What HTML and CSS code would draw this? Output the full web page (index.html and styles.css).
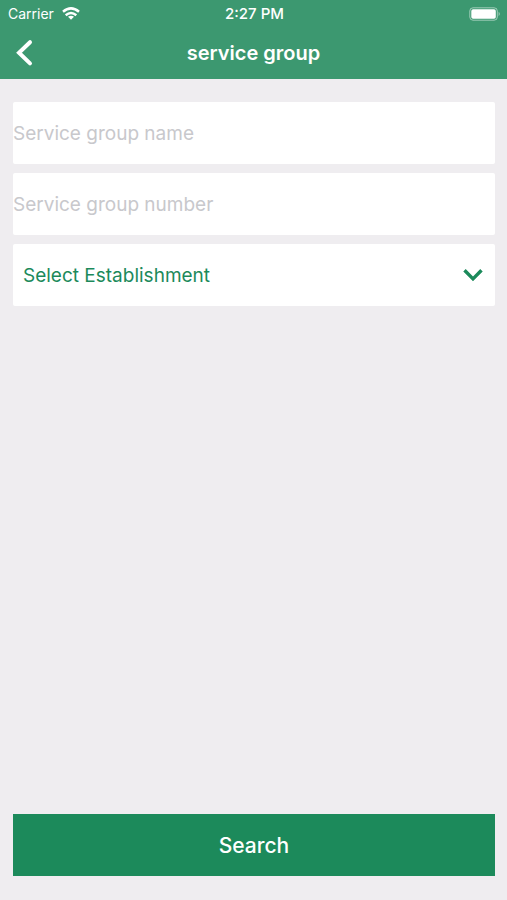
FILE: index.html
```html
<!DOCTYPE html>
<html lang="en">
<head>
<meta charset="utf-8">
<meta name="viewport" content="width=device-width, initial-scale=1">
<title>service group</title>
<link rel="stylesheet" href="styles.css">
</head>
<body>
<header class="header">
  <div class="status">
    <div class="carrier">
      <span>Carrier</span>
      <svg class="wifi" viewBox="0 0 18 13" aria-hidden="true">
        <g fill="none" stroke="currentColor" stroke-width="2.5">
          <path d="M1 4.8Q9-2 17 4.8"/>
          <path d="M3.7 8.2Q9 3.8 14.3 8.2"/>
        </g>
        <path d="M6 9.8Q9 7.6 12 9.8L9 12.8Z" fill="currentColor"/>
      </svg>
    </div>
    <span class="time">2:27 PM</span>
    <svg class="battery" viewBox="0 0 32 14" aria-hidden="true">
      <rect x=".8" y=".8" width="27.5" height="12.4" rx="3.2" fill="none" stroke="currentColor" stroke-opacity=".5"/>
      <rect x="2.3" y="2.3" width="24.5" height="9.4" rx="1.8" fill="currentColor"/>
      <path d="M29.6 4.8Q32 7 29.6 9.2Z" fill="currentColor" fill-opacity=".5"/>
    </svg>
  </div>
  <nav class="bar">
    <button class="back" type="button" aria-label="Back">
      <svg viewBox="0 0 20 28" aria-hidden="true"><path d="M16 3.2L5 13.8L16 24.4" fill="none" stroke="currentColor" stroke-width="4" stroke-linecap="round" stroke-linejoin="miter"/></svg>
    </button>
    <h1 class="title">service group</h1>
  </nav>
</header>
<form class="form">
  <input class="field" type="text" placeholder="Service group name" aria-label="Service group name">
  <input class="field" type="text" placeholder="Service group number" aria-label="Service group number">
  <div class="picker">
    <select class="field select" aria-label="Select Establishment">
      <option>Select Establishment</option>
    </select>
    <svg class="chevron" viewBox="0 0 20 13" aria-hidden="true"><path d="M1.5 1.7L10 10.4L18.5 1.7" fill="none" stroke="currentColor" stroke-width="3.4"/></svg>
  </div>
  <button class="search" type="submit">Search</button>
</form>
</body>
</html>
```

FILE: styles.css
```css
* {
  box-sizing: border-box;
}

body {
  margin: 0;
  min-height: 100vh;
  display: flex;
  flex-direction: column;
  background: #efedf0;
  font-family: Inter, "Liberation Sans", sans-serif;
}

button,
input,
select {
  font: inherit;
  border: 0;
  border-radius: 0;
  margin: 0;
}

.header {
  background: #3c9870;
  color: #fff;
}

.status {
  display: grid;
  grid-template-columns: 1fr auto 1fr;
  align-items: center;
  height: 27px;
  padding: 0 6px 0 8px;
  font-size: 14px;
  line-height: 27px;
}

.carrier {
  display: flex;
  align-items: center;
  gap: 8px;
}

.wifi {
  width: 18px;
  height: 13px;
}

.time {
  font-size: 15px;
  font-weight: 500;
}

.battery {
  width: 32px;
  height: 14px;
  justify-self: end;
}

.bar {
  display: grid;
  grid-template-columns: 1fr auto 1fr;
  align-items: center;
  height: 52px;
  padding: 0 14px;
}

.back {
  display: flex;
  justify-self: start;
  padding: 0;
  background: none;
  color: inherit;
}

.back svg {
  width: 20px;
  height: 28px;
}

.title {
  margin: 0;
  font-size: 20px;
  font-weight: 600;
}

.form {
  flex: 1;
  display: flex;
  flex-direction: column;
  gap: 9px;
  padding: 23px 12px 24px 13px;
}

.field {
  display: block;
  width: 100%;
  height: 62px;
  padding: 0;
  background: #fff;
  border-radius: 2px;
  color: #1c8a5b;
  font-size: 19px;
}

.field::placeholder {
  color: #c8c8cc;
  opacity: 1;
}

.picker {
  position: relative;
}

.select {
  appearance: none;
  padding: 0 40px 0 10px;
}

.chevron {
  position: absolute;
  top: 50%;
  right: 12px;
  width: 20px;
  height: 13px;
  transform: translateY(-50%);
  color: #1c8a5b;
  pointer-events: none;
}

.search {
  height: 62px;
  margin-top: auto;
  background: #1c8a5b;
  color: #fff;
  font-size: 21px;
  font-weight: 500;
}
```
